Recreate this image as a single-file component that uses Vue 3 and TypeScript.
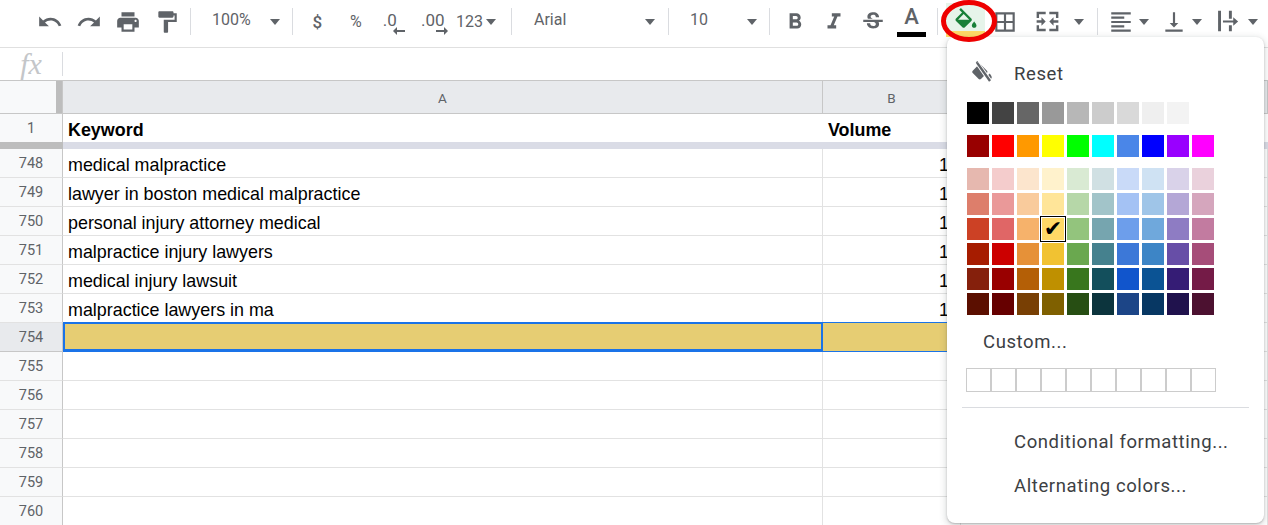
<template>
  <div class="page">
    <!-- Toolbar -->
    <div class="toolbar">
      <button class="tool"><svg viewBox="0 0 24 24"><path d="M12.5 8c-2.65 0-5.05.99-6.9 2.6L2 7v9h9l-3.62-3.62c1.39-1.16 3.16-1.88 5.12-1.88 3.54 0 6.55 2.31 7.6 5.5l2.37-.78C21.08 11.03 17.15 8 12.5 8z" /></svg></button>
      <button class="tool"><svg viewBox="0 0 24 24"><path d="M18.4 10.6C16.55 8.99 14.15 8 11.5 8c-4.65 0-8.58 3.03-9.96 7.22L3.9 16c1.05-3.19 4.05-5.5 7.6-5.5 1.95 0 3.73.72 5.12 1.88L13 16h9V7l-3.6 3.6z" /></svg></button>
      <button class="tool"><svg viewBox="0 0 24 24"><path d="M19 8H5c-1.66 0-3 1.34-3 3v6h4v4h12v-4h4v-6c0-1.66-1.34-3-3-3zm-3 11H8v-5h8v5zm3-7c-.55 0-1-.45-1-1s.45-1 1-1 1 .45 1 1-.45 1-1 1zm-1-9H6v4h12V3z" /></svg></button>
      <button class="tool"><svg viewBox="0 0 24 24"><path d="M18 4V3c0-.55-.45-1-1-1H5c-.55 0-1 .45-1 1v4c0 .55.45 1 1 1h12c.55 0 1-.45 1-1V6h1v4H9v11c0 .55.45 1 1 1h2c.55 0 1-.45 1-1v-9h8V4h-3z" /></svg></button>
      <span class="sep sep-history"></span>

      <div class="pick pick-zoom"><span>100%</span><i class="caret"></i></div>
      <span class="sep"></span>

      <div class="numbers">
        <button class="tool narrow text-tool dollar">$</button>
        <button class="tool narrow text-tool percent">%</button>
        <button class="tool narrow text-tool decimal">
          <span class="less-text">.0</span>
          <svg class="dec-arrow less" viewBox="0 0 12 8"><path d="M4 0v3h8v2H4v3L0 4z" /></svg>
        </button>
        <button class="tool narrow text-tool decimal">
          <span>.00</span>
          <svg class="dec-arrow more" viewBox="0 0 12 8"><path d="M8 0v3H0v2h8v3l4-4z" /></svg>
        </button>
        <div class="more-formats"><span>123</span><i class="caret"></i></div>
      </div>
      <span class="sep"></span>

      <div class="pick pick-font"><span>Arial</span><i class="caret"></i></div>
      <span class="sep"></span>
      <div class="pick pick-size"><span>10</span><i class="caret"></i></div>
      <span class="sep"></span>

      <div class="formats">
        <button class="tool"><svg viewBox="0 0 24 24"><path d="M15.6 10.79c.97-.67 1.65-1.77 1.65-2.79 0-2.26-1.75-4-4-4H7v14h7.04c2.09 0 3.71-1.7 3.71-3.79 0-1.52-.86-2.82-2.15-3.42zM10 6.5h3c.83 0 1.5.67 1.5 1.5s-.67 1.5-1.5 1.5h-3v-3zm3.5 9H10v-3h3.5c.83 0 1.5.67 1.5 1.5s-.67 1.5-1.5 1.5z" /></svg></button>
        <button class="tool"><svg viewBox="0 0 24 24"><path d="M10 4v3h2.21l-3.42 8H6v3h8v-3h-2.21l3.42-8H18V4z" /></svg></button>
        <button class="tool"><svg viewBox="0 0 24 24"><path d="M6.85 7.08C6.85 4.37 9.45 3 12.24 3c1.64 0 3 .49 3.9 1.28.77.65 1.46 1.73 1.46 3.24h-3.01c0-.31-.05-.59-.15-.85-.29-.86-1.2-1.28-2.25-1.28-1.86 0-2.34 1.02-2.34 1.7 0 .48.25.88.74 1.21.38.25.77.48 1.41.7H7.39c-.21-.34-.54-.89-.54-1.92zM21 12v-2H3v2h9.62c1.15.45 1.96.75 1.96 1.97 0 1-.81 1.67-2.28 1.67-1.54 0-2.93-.54-2.93-2.51H6.4c0 .55.08 1.13.24 1.58.81 2.29 3.29 3.3 5.67 3.3 2.27 0 5.3-.89 5.3-4.05 0-.3-.01-1.16-.48-1.94H21V12z" /></svg></button>
        <button class="tool text-color"><span class="letter">A</span><i class="color-bar"></i></button>
      </div>
      <span class="sep sep-formats"></span>

      <button class="tool fill-tool">
        <svg viewBox="0 0 24 24"><path d="M16.56 8.94L7.62 0 6.21 1.41l2.38 2.38-5.15 5.15c-.59.59-.59 1.54 0 2.12l5.5 5.5c.29.29.68.44 1.06.44s.77-.15 1.06-.44l5.5-5.5c.59-.58.59-1.53 0-2.12zM5.21 10L10 5.21 14.79 10H5.21zM19 11.5s-2 2.17-2 3.5c0 1.1.9 2 2 2s2-.9 2-2c0-1.33-2-3.5-2-3.5z" /></svg>
        <i class="fill-bar"></i>
      </button>
      <button class="tool"><svg viewBox="0 0 24 24"><path d="M3 3v18h18V3H3zm8 16H5v-6h6v6zm0-8H5V5h6v6zm8 8h-6v-6h6v6zm0-8h-6V5h6v6z" /></svg></button>
      <button class="tool merge">
        <svg viewBox="0 0 24 24"><path d="M3 4h7.500v2H5v3H3zM13.500 4H21v5h-2V6h-5.500zM3 15h2v3h5.500v2H3zM19 15h2v5h-7.500v-2H19zM3 11h4V8.500l3.500 3.500L7 15.500V13H3zM21 11h-4V8.500L13.500 12l3.500 3.500V13h4z" /></svg>
      </button>
      <i class="caret merge-caret"></i>
      <span class="sep sep-merge"></span>

      <button class="tool compact align"><svg viewBox="0 0 24 24"><path d="M15 15H3v2h12v-2zm0-8H3v2h12V7zM3 13h18v-2H3v2zm0 8h18v-2H3v2zM3 3v2h18V3H3z" /></svg></button>
      <i class="caret"></i>
      <button class="tool compact valign"><svg viewBox="0 0 24 24"><path d="M16 13h-3V3h-2v10H8l4 4 4-4zM4 19v2h16v-2H4z" /></svg></button>
      <i class="caret"></i>
      <button class="tool compact wrap"><svg viewBox="0 0 24 24"><path d="M1 1.500h2.700v19H1zM11 1.500h2.700V9H11zM11 15h2.700v5.500H11zM5.500 10.500H15v-3l4.500 4-4.500 4v-3H5.500z" /></svg></button>
      <i class="caret"></i>
    </div>

    <!-- Formula bar -->
    <div class="formula-bar">
      <div class="fx-slot"><span class="fx">fx</span></div>
    </div>

    <!-- Sheet -->
    <div class="sheet">
      <div class="col-headers">
        <div class="corner"><i class="freeze-handle"></i></div>
        <div class="col-head col-a">A</div>
        <div class="col-head col-b">B</div>
        <div class="col-head col-c"></div>
      </div>

      <div class="row row-title">
        <div class="row-num">1</div>
        <div class="cell col-a bold">Keyword</div>
        <div class="cell col-b bold">Volume</div>
      </div>
      <div class="freeze-bar">
        <div class="freeze-num"></div>
        <div class="freeze-cells"></div>
      </div>

      <div v-for="row in rows" :key="row.num" class="row" :class="{ selected: row.selected }">
        <div class="row-num">{{ row.num }}</div>
        <div class="cell col-a">{{ row.keyword }}</div>
        <div class="cell col-b num">{{ row.volume }}</div>
        <div class="cell col-c"></div>
      </div>
    </div>

    <!-- Fill color menu -->
    <div class="fill-menu">
      <div class="reset-row">
        <svg class="reset-icon" viewBox="0 0 24 24">
          <path d="M16.56 8.94L7.62 0 6.21 1.41l2.38 2.38-5.15 5.15c-.59.59-.59 1.54 0 2.12l5.5 5.5c.29.29.68.44 1.06.44s.77-.15 1.06-.44l5.5-5.5c.59-.58.59-1.53 0-2.12zM19 11.5s-2 2.17-2 3.5c0 1.1.9 2 2 2s2-.9 2-2c0-1.33-2-3.5-2-3.5z" />
          <path class="slash-halo" d="M7.400 1.500 19.400 18.500" />
          <path class="slash" d="M7.400 1.500 19.400 18.500" />
        </svg>
        <span>Reset</span>
      </div>

      <div class="swatches greys">
        <i v-for="c in greys" :key="c" class="swatch" :style="{ background: c }"></i>
      </div>
      <div class="swatches primaries">
        <i v-for="c in primaries" :key="c" class="swatch" :style="{ background: c }"></i>
      </div>
      <div class="swatches shades">
        <i
          v-for="c in shades"
          :key="c"
          class="swatch"
          :class="{ active: c === activeColor }"
          :style="{ background: c }"
        ><b v-if="c === activeColor" class="check">✔</b></i>
      </div>

      <div class="custom-label">Custom...</div>
      <div class="custom-boxes">
        <i v-for="n in 10" :key="n" class="custom-box"></i>
      </div>

      <div class="menu-divider"></div>
      <div class="menu-item">Conditional formatting...</div>
      <div class="menu-item">Alternating colors...</div>
    </div>

    <!-- Annotation ring round the fill tool -->
    <svg class="ring" viewBox="0 0 60 46">
      <ellipse cx="28" cy="21" rx="25.500" ry="18.500" />
    </svg>
  </div>
</template>

<script setup lang="ts">
interface SheetRow {
  num: number
  keyword: string
  volume: string
  selected?: boolean
}

const rows: SheetRow[] = [
  { num: 748, keyword: 'medical malpractice', volume: '10' },
  { num: 749, keyword: 'lawyer in boston medical malpractice', volume: '10' },
  { num: 750, keyword: 'personal injury attorney medical', volume: '10' },
  { num: 751, keyword: 'malpractice injury lawyers', volume: '10' },
  { num: 752, keyword: 'medical injury lawsuit', volume: '10' },
  { num: 753, keyword: 'malpractice lawyers in ma', volume: '10' },
  { num: 754, keyword: '', volume: '', selected: true },
  { num: 755, keyword: '', volume: '' },
  { num: 756, keyword: '', volume: '' },
  { num: 757, keyword: '', volume: '' },
  { num: 758, keyword: '', volume: '' },
  { num: 759, keyword: '', volume: '' },
  { num: 760, keyword: '', volume: '' }
]

const activeColor = '#ffd966'

const greys = ['#000000', '#434343', '#666666', '#999999', '#b7b7b7', '#cccccc', '#d9d9d9', '#efefef', '#f3f3f3']
const primaries = ['#980000', '#ff0000', '#ff9900', '#ffff00', '#00ff00', '#00ffff', '#4a86e8', '#0000ff', '#9900ff', '#ff00ff']
const shades = [
  '#e6b8af', '#f4cccc', '#fce5cd', '#fff2cc', '#d9ead3', '#d0e0e3', '#c9daf8', '#cfe2f3', '#d9d2e9', '#ead1dc',
  '#dd7e6b', '#ea9999', '#f9cb9c', '#ffe599', '#b6d7a8', '#a2c4c9', '#a4c2f4', '#9fc5e8', '#b4a7d6', '#d5a6bd',
  '#cc4125', '#e06666', '#f6b26b', '#ffd966', '#93c47d', '#76a5af', '#6d9eeb', '#6fa8dc', '#8e7cc3', '#c27ba0',
  '#a61c00', '#cc0000', '#e69138', '#f1c232', '#6aa84f', '#45818e', '#3c78d8', '#3d85c6', '#674ea7', '#a64d79',
  '#85200c', '#990000', '#b45f06', '#bf9000', '#38761d', '#134f5c', '#1155cc', '#0b5394', '#351c75', '#741b47',
  '#5b0f00', '#660000', '#783f04', '#7f6000', '#274e13', '#0c343d', '#1c4587', '#073763', '#20124d', '#4c1130'
]
</script>

<style>
html,
body {
  margin: 0;
  overflow: hidden;
  background: #fff;
}
</style>

<style scoped>
.page {
  position: relative;
  width: 1268px;
  height: 525px;
  overflow: hidden;
  font-family: Roboto, 'Liberation Sans', sans-serif;
  background: #fff;
}

/* Toolbar */
.toolbar {
  display: flex;
  align-items: center;
  height: 43px;
  padding: 0 0 4px 30px;
  border-bottom: 1px solid #e0e0e0;
  color: #5f6368;
  font-size: 16px;
}

.tool {
  position: relative;
  display: flex;
  flex: none;
  align-items: center;
  justify-content: center;
  width: 39px;
  height: 40px;
  padding: 0;
  border: 0;
  background: none;
  color: inherit;
  font: inherit;
}

.tool svg {
  width: 26px;
  height: 26px;
  fill: #5f6368;
}

.sep {
  flex: none;
  width: 1px;
  height: 27px;
  background: #dadce0;
}

.sep-history {
  margin-left: 4px;
}

.caret {
  flex: none;
  width: 0;
  height: 0;
  border-top: 6px solid #5f6368;
  border-left: 5.500px solid transparent;
  border-right: 5.500px solid transparent;
}

.pick {
  display: flex;
  flex: none;
  align-items: center;
  justify-content: space-between;
  box-sizing: border-box;
  height: 40px;
}

.pick span {
  margin-top: -4px;
}

.pick-zoom {
  width: 101px;
  padding: 0 12px 0 21px;
}

.pick-font {
  width: 156px;
  padding: 0 13px 0 22px;
}

.pick-size {
  width: 100px;
  padding: 0 12px 0 21px;
}

.numbers {
  display: flex;
  flex: none;
  align-items: center;
  width: 218px;
  padding-left: 5px;
  box-sizing: border-box;
}

.narrow {
  width: 38.500px;
}

.text-tool {
  font-size: 17px;
}

.dollar {
  font-weight: 500;
}

.percent {
  font-size: 16px;
}

.decimal span {
  margin-top: -4px;
}

.decimal .less-text {
  margin-left: -9px;
}

.tool .dec-arrow {
  position: absolute;
  top: 25px;
  width: 12px;
  height: 8px;
}

.dec-arrow.less {
  left: 18px;
}

.dec-arrow.more {
  left: 22px;
}

.more-formats {
  display: flex;
  align-items: center;
  gap: 3px;
  margin-left: 4px;
}

.formats {
  display: flex;
  flex: none;
  margin-left: 5px;
}

.text-color {
  flex-direction: column;
}

.letter {
  margin-top: -10px;
  font-size: 22px;
  font-weight: 500;
  line-height: 24px;
}

.color-bar {
  position: absolute;
  left: 5px;
  bottom: 5px;
  width: 29px;
  height: 5px;
  background: #000;
}

.sep-formats {
  margin-left: 6px;
}

.fill-tool {
  margin-left: 8px;
  margin-bottom: 6px;
  height: 34px;
  background: #e6f4ea;
  align-self: flex-end;
}

.tool.fill-tool svg {
  width: 28px;
  height: 28px;
  margin-top: 4px;
  fill: #188038;
}

.fill-bar {
  position: absolute;
  left: 0;
  right: 0;
  bottom: 0;
  height: 6px;
  background: #ffd966;
}

.merge {
  width: 46px;
}

.tool.merge svg {
  width: 29px;
  height: 29px;
}

.merge-caret {
  margin-left: 4px;
}

.sep-merge {
  margin-left: 13px;
}

.compact {
  width: 36px;
}

.align {
  margin-left: 5px;
}

.valign {
  margin-left: 7px;
}

.wrap {
  margin-left: 10px;
}

/* Formula bar */
.formula-bar {
  box-sizing: border-box;
  height: 33px;
  padding-top: 4px;
  border-bottom: 1px solid #c7c7c7;
}

.fx-slot {
  display: flex;
  align-items: center;
  justify-content: center;
  width: 62px;
  height: 24px;
  border-right: 1px solid #dadce0;
}

.fx {
  font-family: 'Liberation Serif', serif;
  font-style: italic;
  font-size: 30px;
  line-height: 24px;
  color: #c4c6c9;
}

/* Sheet */
.col-headers {
  display: flex;
  height: 32px;
  border-bottom: 1px solid #c7c7c7;
}

.corner {
  display: flex;
  justify-content: flex-end;
  flex: none;
  width: 62px;
  border-right: 1px solid #c7c7c7;
  background: #f8f9fa;
}

.freeze-handle {
  width: 6px;
  background: #bdbdbd;
}

.col-a {
  flex: none;
  width: 760px;
  box-sizing: border-box;
}

.col-b {
  flex: none;
  width: 138px;
  box-sizing: border-box;
}

.col-c {
  flex: 1;
}

.col-head {
  display: flex;
  align-items: center;
  justify-content: center;
  padding-top: 1px;
  border-right: 1px solid #c7c7c7;
  background: #e8eaed;
  color: #5f6368;
  font-size: 13.500px;
}

.row {
  display: flex;
  height: 29px;
  box-sizing: border-box;
  border-bottom: 1px solid #e2e2e2;
}

.row-title {
  height: 28px;
  border-bottom: 0;
}

.row-num {
  display: flex;
  flex: none;
  align-items: center;
  justify-content: center;
  box-sizing: border-box;
  width: 63px;
  margin-bottom: -1px;
  border-right: 1px solid #c7c7c7;
  border-bottom: 1px solid #e2e2e2;
  background: #f8f9fa;
  color: #5f6368;
  font-size: 14.500px;
}

.row-title .row-num {
  margin-bottom: 0;
  border-bottom: 0;
}

.cell {
  position: relative;
  padding: 2px 1px 0 5px;
  margin-bottom: -1px;
  border-right: 1px solid #e2e2e2;
  border-bottom: 1px solid #e2e2e2;
  color: #000;
  font-family: 'Liberation Sans', Arial, sans-serif;
  font-size: 17.900px;
  line-height: 29px;
  white-space: nowrap;
}

.row-title .cell {
  margin-bottom: 0;
  border-bottom: 0;
  border-right-color: #fff;
}

.bold {
  font-weight: 700;
}

.num {
  text-align: right;
}

.freeze-bar {
  display: flex;
  height: 7px;
}

.freeze-num {
  flex: none;
  width: 63px;
  background: #bdbdbd;
}

.freeze-cells {
  flex: 1;
  background: #dadce6;
}

/* Selected row */
.selected .row-num {
  background: #e8eaed;
  border-bottom-color: #c7c7c7;
}

.selected .cell {
  background: #e6cd73;
}

.selected .col-a::after {
  content: '';
  position: absolute;
  top: -1px;
  right: -1px;
  bottom: -1px;
  left: 0;
  border: 2px solid #1a73e8;
  border-bottom-width: 3px;
}

.selected .col-b {
  border-bottom-color: #1a73e8;
  border-right: 0;
}

.selected .col-b::before {
  content: '';
  position: absolute;
  top: -1px;
  left: 0;
  right: 0;
  height: 1px;
  background: #1a73e8;
}

.selected .col-c {
  background: #fff;
}

/* Fill color menu */
.fill-menu {
  position: absolute;
  top: 37px;
  left: 947px;
  box-sizing: border-box;
  width: 317px;
  height: 486px;
  padding: 17px 0 0 20px;
  border-radius: 8px;
  background: #fff;
  box-shadow: 0 1px 2px rgba(60, 64, 67, 0.3), 0 2px 6px 2px rgba(60, 64, 67, 0.15);
  color: #3c4043;
  font-size: 18.500px;
  letter-spacing: 0.600px;
}

.reset-row {
  display: flex;
  align-items: center;
  height: 38px;
  padding-left: 47px;
  position: relative;
}

.reset-row span {
  margin-top: 2px;
}

.reset-icon {
  position: absolute;
  left: 2px;
  top: 7px;
  width: 26px;
  height: 26px;
  fill: #5f6368;
}

.reset-icon .slash-halo {
  fill: none;
  stroke: #fff;
  stroke-width: 4;
}

.reset-icon .slash {
  fill: none;
  stroke: #5f6368;
  stroke-width: 2.200;
}

.swatches {
  display: grid;
  grid-template-columns: repeat(10, 22px);
  gap: 3px;
}

.greys {
  margin-top: 10px;
}

.primaries,
.shades {
  margin-top: 11px;
}

.swatch {
  position: relative;
  display: block;
  width: 22px;
  height: 22px;
}

.swatch.active {
  outline: 1px solid #000;
  outline-offset: 1px;
}

.check {
  position: absolute;
  inset: 0;
  display: flex;
  align-items: center;
  justify-content: center;
  color: #000;
  font-family: 'DejaVu Sans', sans-serif;
  font-size: 22px;
  font-weight: 400;
  line-height: 22px;
  letter-spacing: 0;
}

.custom-label {
  margin: 15px 0 0 16px;
  line-height: 24px;
}

.custom-boxes {
  display: flex;
  width: 250px;
  margin: 14px 0 0 -1px;
}

.custom-box {
  box-sizing: border-box;
  flex: none;
  width: 25px;
  height: 24px;
  border: 1px solid #ccc;
}

.menu-divider {
  width: 287px;
  height: 1px;
  margin: 15px 0 0 -5px;
  background: #dadce0;
}

.menu-item {
  margin: 22px 0 0 47px;
  line-height: 24px;
  white-space: nowrap;
}

.menu-item + .menu-item {
  margin-top: 20px;
}

/* Annotation ring */
.ring {
  position: absolute;
  top: 0;
  left: 941px;
  width: 60px;
  height: 46px;
}

.ring ellipse {
  fill: none;
  stroke: #ee0000;
  stroke-width: 5;
}
</style>
